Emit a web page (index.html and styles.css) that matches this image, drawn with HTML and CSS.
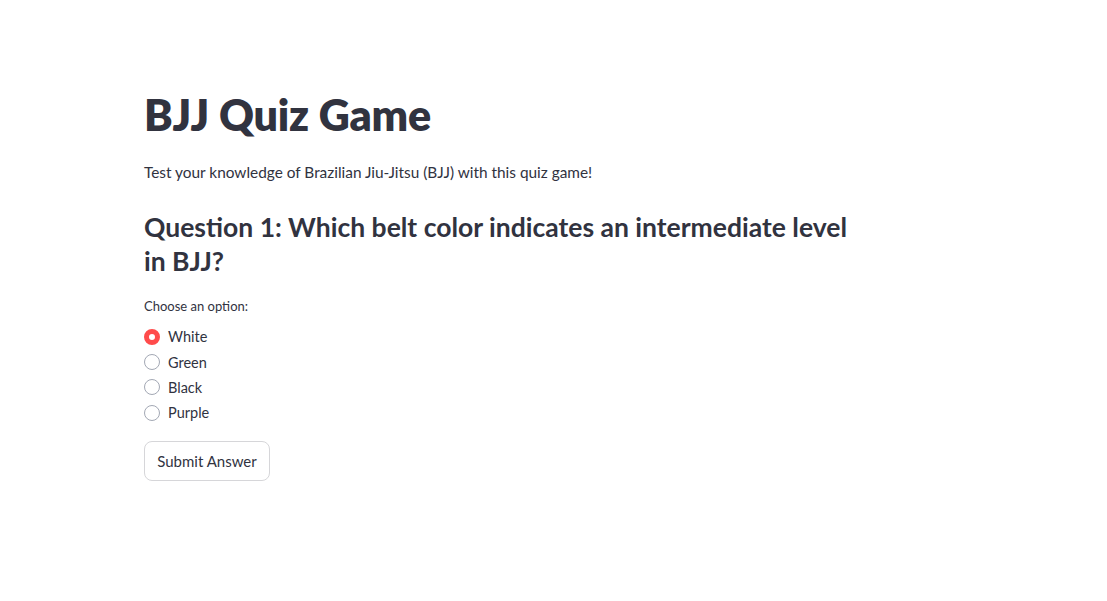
FILE: index.html
```html
<!DOCTYPE html>
<html lang="en">
<head>
<meta charset="utf-8">
<title>BJJ Quiz Game</title>
<link rel="stylesheet" href="styles.css">
</head>
<body>
<main class="app">
  <div class="block">
    <h1 class="title">BJJ Quiz Game</h1>
    <p class="intro">Test your knowledge of Brazilian Jiu-Jitsu (BJJ) with this quiz game!</p>
    <h3 class="question">Question 1: Which belt color indicates an intermediate level in BJJ?</h3>
    <div class="radio-group">
      <div class="radio-label">Choose an option:</div>
      <label class="radio selected"><span class="dot"></span><span>White</span></label>
      <label class="radio"><span class="dot"></span><span>Green</span></label>
      <label class="radio"><span class="dot"></span><span>Black</span></label>
      <label class="radio"><span class="dot"></span><span>Purple</span></label>
    </div>
    <div class="actions">
      <button class="btn" type="button">Submit Answer</button>
    </div>
  </div>
</main>
</body>
</html>
```
FILE: styles.css
```css
* { box-sizing: border-box; }
html, body { margin: 0; padding: 0; background: #fff; }
body {
  font-family: "Lato", "Noto Sans", "Liberation Sans", sans-serif;
  color: #31333f;
}
.app {
  padding: 88px 0 0 144px;
}
.block {
  width: 704px;
  display: flex;
  flex-direction: column;
}
.title {
  margin: 0;
  font-size: 43px;
  font-weight: 800;
  line-height: 54px;
  letter-spacing: -0.2px;
}
.intro {
  margin: 18px 0 0;
  font-size: 15.4px;
  line-height: 24px;
}
.question {
  margin: 26px 0 0;
  font-size: 26.5px;
  font-weight: 700;
  line-height: 34px;
}
.radio-group {
  margin-top: 19px;
  display: flex;
  flex-direction: column;
}
.radio-label {
  font-size: 13px;
  line-height: 18px;
  margin-bottom: 9px;
}
.radio {
  display: flex;
  align-items: center;
  gap: 8px;
  height: 25.4px;
  font-size: 14.5px;
}
.dot {
  width: 16px;
  height: 16px;
  border-radius: 50%;
  border: 1px solid #a3a8b4;
  background: #fff;
  flex: none;
}
.selected .dot {
  border: 5px solid #ff4b4b;
  background: #fff;
}
.actions {
  margin-top: 15px;
}
.btn {
  font: inherit;
  font-size: 15px;
  color: #31333f;
  background: #fff;
  border: 1px solid #d6d6d9;
  border-radius: 8px;
  width: 126px;
  height: 40px;
  padding: 0 10px;
}
```
